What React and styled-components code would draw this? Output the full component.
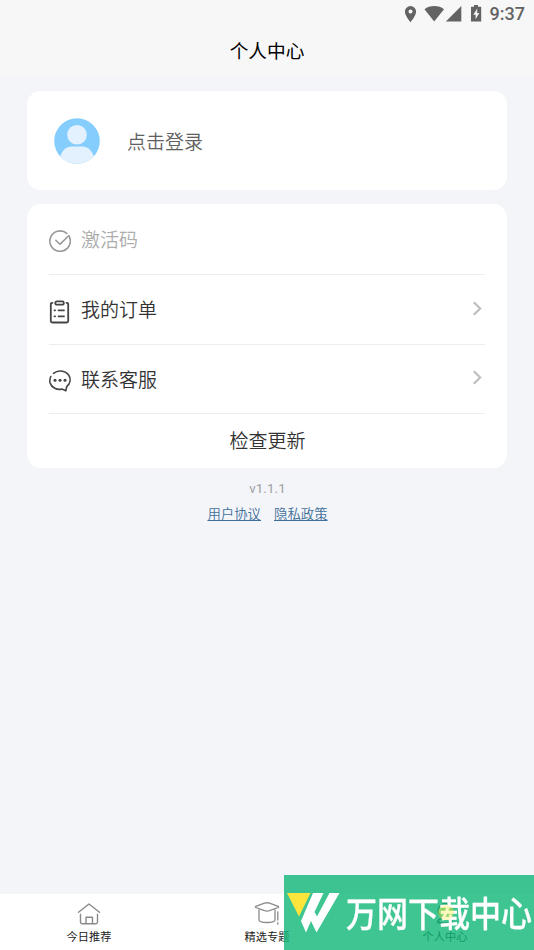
import React from 'react';
import styled, { createGlobalStyle } from 'styled-components';

const GlobalStyle = createGlobalStyle`
  * {
    box-sizing: border-box;
  }

  body {
    margin: 0;
    background: #f4f5f9;
    font-family: Roboto, 'Noto Sans CJK SC', sans-serif;
    font-weight: 350;
    color: #333;
  }

  svg {
    display: block;
    flex: none;
  }
`;

const Page = styled.div`
  height: 950px;
  display: flex;
  flex-direction: column;
  overflow: hidden;
`;

const Header = styled.header`
  height: 76px;
  background: #f7f7f7;
`;

const StatusBar = styled.div`
  height: 27px;
  display: flex;
  align-items: center;
  justify-content: flex-end;
  padding-right: 9px;
  color: #636363;
`;

const Clock = styled.span`
  margin-left: 8px;
  font-size: 18px;
  line-height: 27px;
  font-weight: 500;
`;

const Title = styled.h1`
  margin: 0;
  font-size: 18.7px;
  line-height: 50px;
  font-weight: 400;
  color: #000;
  text-align: center;
`;

const Content = styled.main`
  flex: 1;
  padding: 15px 27px 0;
`;

const Card = styled.section`
  background: #fff;
  border-radius: 14px;
  margin-bottom: 14px;
`;

const Profile = styled(Card)`
  height: 99px;
  display: flex;
  align-items: center;
  gap: 27px;
  padding-left: 27px;
`;

const LoginText = styled.span`
  padding-top: 4px;
  font-size: 19px;
  line-height: 28px;
  color: #606060;
`;

const Menu = styled(Card)`
  height: 264px;
  padding: 0 22px;
  margin-bottom: 0;
`;

const MenuItem = styled.div`
  height: ${(props) => props.$height}px;
  display: flex;
  align-items: center;
  border-bottom: 1px solid #ededed;
  color: ${(props) => (props.$muted ? '#adadad' : '#333')};
  font-size: 19px;
`;

const MenuIcon = styled.span`
  width: 22px;
  margin-right: 10px;
  padding-top: 4px;
  color: ${(props) => (props.$muted ? '#999' : '#444')};
`;

const MenuLabel = styled.span`
  flex: 1;
  padding-top: 3px;
  line-height: 28px;
`;

const Update = styled.div`
  padding: 1px 0 0 1px;
  text-align: center;
  font-size: 19px;
  line-height: 54px;
`;

const Version = styled.div`
  margin-top: 11px;
  padding-left: 1px;
  font-size: 13.3px;
  font-weight: 400;
  line-height: 20px;
  letter-spacing: 0.1px;
  color: #a0a0a0;
  text-align: center;
`;

const Links = styled.div`
  margin-top: 6px;
  padding-left: 1px;
  display: flex;
  justify-content: center;
  gap: 13px;
`;

const Link = styled.a`
  font-size: 13.4px;
  line-height: 20px;
  color: #3f7099;
  text-decoration: underline;
`;

const TabBar = styled.nav`
  height: 56px;
  display: flex;
  background: #fff;
`;

const Tab = styled.div`
  flex: 1;
  display: flex;
  flex-direction: column;
  align-items: center;
  padding-top: 8px;
  color: ${(props) => (props.$active ? '#333' : '#8a8a8a')};
`;

const TabLabel = styled.span`
  margin-top: 4px;
  font-size: 11.2px;
  font-weight: 400;
  line-height: 16px;
  color: #222;
`;

const Watermark = styled.div`
  position: fixed;
  right: 0;
  bottom: 0;
  width: 250px;
  height: 75px;
  display: flex;
  align-items: center;
  padding-left: 3px;
  background: rgba(15, 182, 119, 0.8);
`;

const WatermarkText = styled.span`
  margin-left: 6px;
  padding-bottom: 2px;
  font-family: 'Noto Sans CJK SC', sans-serif;
  font-size: 35px;
  font-weight: 500;
  line-height: 40px;
  white-space: nowrap;
  color: #fff;
  -webkit-text-stroke: 0.3px #fff;
  transform: scaleX(0.886);
  transform-origin: left center;
`;

const stroke = {
  fill: 'none',
  stroke: 'currentColor',
  strokeLinecap: 'round',
  strokeLinejoin: 'round',
};

const StatusIcons = () => (
  <svg width="78" height="20" viewBox="404 3.500 78 20" fill="currentColor">
    <path
      fillRule="evenodd"
      d="M410.500 5.500a5.600 5.600 0 0 0-5.600 5.600c0 4.200 5.600 10.700 5.600 10.700s5.600-6.500 5.600-10.700a5.600 5.600 0 0 0-5.600-5.600zm0 3.600a2 2 0 1 1 0 4 2 2 0 0 1 0-4z"
    />
    <path d="M424.500 8.700C429.500 4.300 439 4.300 444 8.700L434.200 21z" />
    <path d="M461.300 5.500V21h-15.500z" />
    <path
      fillRule="evenodd"
      d="M474 4.500h4v1.700h3.200V21H471V6.200h3zM477.300 8l-4 6.300h2.300v4.500l3.700-6.300h-2.200z"
    />
  </svg>
);

const Avatar = () => (
  <svg width="46" height="46" viewBox="0 0 46 46">
    <defs>
      <clipPath id="avatar">
        <circle cx="23" cy="23" r="22.800" />
      </clipPath>
    </defs>
    <g clipPath="url(#avatar)">
      <rect width="46" height="46" fill="#84cdfd" />
      <circle cx="23" cy="16.800" r="9.800" fill="#e3f1fe" />
      <path d="M5.500 46v-5c1.500-8 6.500-12.500 12.500-12.500h10c6 0 11 4.500 12.500 12.500v5z" fill="#e3f1fe" />
    </g>
  </svg>
);

const CheckIcon = () => (
  <svg width="22" height="22" viewBox="0 0 22 22" strokeWidth="1.600" {...stroke}>
    <path d="M20.300 6.700A10.200 10.200 0 1 1 17.800 3.400" />
    <path d="M6.800 10.300l4 4L20 5.500" />
  </svg>
);

const OrderIcon = () => (
  <svg width="22" height="24" viewBox="0 0 22 24" strokeWidth="1.800" {...stroke}>
    <path d="M3.500 2.800H3A1.200 1.200 0 0 0 1.800 4v17c0 .9.600 1.500 1.500 1.500h14.400c.9 0 1.500-.6 1.500-1.500V4A1.200 1.200 0 0 0 18 2.800h-.5" />
    <rect x="6.300" y="1.400" width="8.500" height="3.300" rx="1.500" />
    <path d="M5.500 10.300h.6M9.500 10.300h5.500M5.500 16.300h.6M9.500 16.300h5.500" />
  </svg>
);

const ServiceIcon = () => (
  <svg width="22" height="22" viewBox="0 0 22 22" strokeWidth="1.600" {...stroke}>
    <path d="M4.500 3.300C8.700-.2 16 .2 19.500 4.800c2.700 4 1.800 8.700-1.800 11.900l-.9 4-3.800-1.600C8 20.300 2.500 17.500 1.100 13c-.5-2.300-.3-4.500.7-6.500" />
    <g fill="currentColor" stroke="none">
      <circle cx="6" cy="10.300" r="1.500" />
      <circle cx="11" cy="10.300" r="1.500" />
      <circle cx="16" cy="10.300" r="1.500" />
    </g>
  </svg>
);

const Chevron = () => (
  <svg width="13" height="18" viewBox="0 0 13 18" fill="none" stroke="#bfbfbf" strokeWidth="2.300">
    <path d="M1.800 1.200L8.100 7.500 1.800 13.800" />
  </svg>
);

const HomeIcon = () => (
  <svg width="24" height="24" viewBox="0 0 24 24" strokeWidth="1.400" {...stroke}>
    <path d="M1.500 10.300L12 2l10.500 8.300M3.500 12.300v7.700c0 1 .7 1.700 1.700 1.700h13.600c1 0 1.700-.7 1.700-1.700v-7.700M9 21.500v-6.200h6.500v6.200" />
  </svg>
);

const TopicIcon = () => (
  <svg width="26" height="24" viewBox="0 0 26 24" strokeWidth="1.300" {...stroke}>
    <path d="M1.800 4.300L10.500 1.100q2.500-.7 5 0l8.700 3.200q.8.600 0 1.200l-8.700 3.200q-2.500.7-5 0L1.800 5.500q-.8-.6 0-1.200zM5 8v10c0 3.300 16 3.300 16 0V8M23.800 10v8M23.800 20.700v1.500" />
  </svg>
);

const UserIcon = () => (
  <svg width="24" height="24" viewBox="0 0 24 24" strokeWidth="1.400" {...stroke}>
    <circle cx="14" cy="8" r="6" fill="#ffe800" stroke="none" />
    <path d="M15.500 2.500a7 7 0 1 0 2.500 10M4.500 20c1.500-3 4-4.500 7.500-4.500s6 1.500 7.500 4.500c-4 2-11 2-15 0z" />
  </svg>
);

const WatermarkLogo = () => (
  <svg width="53" height="40" viewBox="287 893 53 40">
    <path d="M287 893h23.500l-11.500 23.500z" fill="#fee53b" />
    <path
      d="M313 893h10.500L314.500 912l2.500 4.500L329.500 893h10L316.500 932.500 311 921 306 932.500 301 921z"
      fill="#fff"
    />
  </svg>
);

const Glow = styled.span`
  position: absolute;
  left: 154px;
  top: 30px;
  width: 16px;
  height: 15px;
  border-radius: 50%;
  background: rgba(255, 240, 90, 0.4);
`;

const menu = [
  { label: '激活码', icon: <CheckIcon />, height: 71, muted: true },
  { label: '我的订单', icon: <OrderIcon />, height: 70, arrow: true },
  { label: '联系客服', icon: <ServiceIcon />, height: 69, arrow: true },
];

const tabs = [
  { label: '今日推荐', icon: <HomeIcon /> },
  { label: '精选专题', icon: <TopicIcon /> },
  { label: '个人中心', icon: <UserIcon />, active: true },
];

function App() {
  return (
    <Page>
      <GlobalStyle />
      <Header>
        <StatusBar>
          <StatusIcons />
          <Clock>9:37</Clock>
        </StatusBar>
        <Title>个人中心</Title>
      </Header>
      <Content>
        <Profile>
          <Avatar />
          <LoginText>点击登录</LoginText>
        </Profile>
        <Menu>
          {menu.map((item) => (
            <MenuItem key={item.label} $height={item.height} $muted={item.muted}>
              <MenuIcon $muted={item.muted}>{item.icon}</MenuIcon>
              <MenuLabel>{item.label}</MenuLabel>
              {item.arrow && <Chevron />}
            </MenuItem>
          ))}
          <Update>检查更新</Update>
        </Menu>
        <Version>v1.1.1</Version>
        <Links>
          <Link>用户协议</Link>
          <Link>隐私政策</Link>
        </Links>
      </Content>
      <TabBar>
        {tabs.map((tab) => (
          <Tab key={tab.label} $active={tab.active}>
            {tab.icon}
            <TabLabel>{tab.label}</TabLabel>
          </Tab>
        ))}
      </TabBar>
      <Watermark>
        <WatermarkLogo />
        <WatermarkText>万网下载中心</WatermarkText>
        <Glow />
      </Watermark>
    </Page>
  );
}

export default App;
